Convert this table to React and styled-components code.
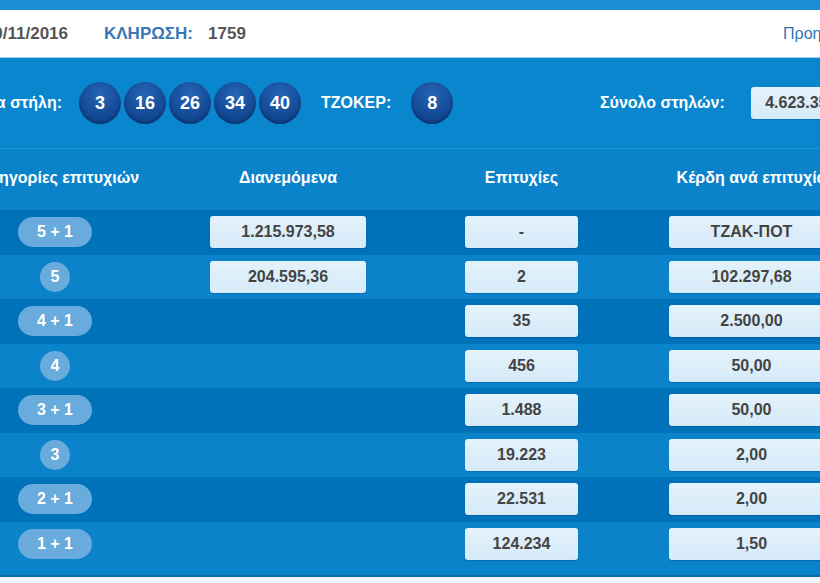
import React from 'react';
import styled, { createGlobalStyle } from 'styled-components';

const GlobalStyle = createGlobalStyle`
  html, body {
    margin: 0;
    padding: 0;
    background: #eef8fc;
    overflow: hidden;
  }
  body {
    font-family: "Liberation Sans", Arial, sans-serif;
  }
`;

const Page = styled.div`
  margin-left: -200px;
  width: 1240px;
`;

const TopStrip = styled.div`
  height: 10px;
  background: #1a8fd6;
`;

const InfoBar = styled.div`
  height: 47px;
  background: #fff;
  border-bottom: 1px solid #9fd0ee;
  display: grid;
  grid-template-columns: 268px 715px auto;
  align-items: center;
  font-size: 17px;
  font-weight: bold;
`;

const InfoCell = styled.div`
  display: flex;
  align-items: center;
  justify-content: ${p => (p.$right ? 'flex-end' : 'flex-start')};
  padding-left: ${p => p.$pad || 0}px;
  white-space: nowrap;
`;

const InfoLabel = styled.span`
  color: #3a78b4;
  margin-right: 15px;
`;

const InfoValue = styled.span`
  color: #555;
`;

const InfoLink = styled.span`
  color: #2f73b4;
  font-weight: normal;
  font-size: 16px;
`;

const DrawBar = styled.div`
  height: 90px;
  background: #0a86ce;
  border-bottom: 1px solid #1b93d8;
  display: grid;
  grid-template-columns: 262px 538px auto;
  align-items: center;
`;

const DrawLabel = styled.span`
  color: #fff;
  font-size: 16px;
  font-weight: bold;
  white-space: nowrap;
  text-align: ${p => (p.$right ? 'right' : 'left')};
`;

const BallGroup = styled.div`
  display: flex;
  align-items: center;
  padding-left: 17px;
`;

const Balls = styled.div`
  display: flex;
  gap: 3px;
  margin-right: 20px;
`;

const Ball = styled.div`
  width: 42px;
  height: 42px;
  border-radius: 50%;
  background: radial-gradient(circle at 50% 30%, #2866b6 0%, #17509e 45%, #0c3a7e 100%);
  box-shadow: inset 0 -2px 3px rgba(0, 20, 60, 0.35);
  display: flex;
  align-items: center;
  justify-content: center;
  color: #fff;
  font-size: 18px;
  font-weight: bold;
  margin-left: ${p => p.$gap || 0}px;
`;

const TotalGroup = styled.div`
  display: flex;
  align-items: center;
  gap: 26px;
`;

const ValueBox = styled.div`
  width: ${p => p.$w}px;
  height: 32px;
  border-radius: 3px;
  background: linear-gradient(#e4f2fb, #d5eaf8);
  box-shadow: 0 1px 1px rgba(0, 40, 90, 0.25);
  color: #444;
  font-size: 16px;
  font-weight: bold;
  display: flex;
  align-items: center;
  justify-content: center;
  white-space: nowrap;
`;

const Table = styled.div`
  background: #0a83cb;
  padding-bottom: 9px;
  border-bottom: 2px solid #0a6aa8;
`;

const COLS = '310px 156px 99px 113px 91px 165px';

const HeadRow = styled.div`
  height: 61px;
  padding-left: 100px;
  display: grid;
  grid-template-columns: ${COLS};
  align-items: center;
  color: #fff;
  font-size: 16px;
  font-weight: bold;
  white-space: nowrap;
`;

const HeadCell = styled.div`
  grid-column: ${p => p.$col};
  text-align: center;
  margin-top: -3px;
`;

const Row = styled.div`
  height: 44.5px;
  padding-left: 100px;
  display: grid;
  grid-template-columns: ${COLS};
  align-items: center;
  background: ${p => (p.$dark ? '#0072ba' : 'transparent')};
`;

const Cell = styled.div`
  grid-column: ${p => p.$col};
  display: flex;
  justify-content: center;
`;

const Pill = styled.div`
  min-width: 30px;
  height: 30px;
  padding: 0 ${p => (p.$wide ? 19 : 0)}px;
  box-sizing: border-box;
  border-radius: 15px;
  background: #69abdc;
  color: #fff;
  font-size: 16px;
  font-weight: bold;
  display: flex;
  align-items: center;
  justify-content: center;
  white-space: nowrap;
`;

const rows = [
  { cat: '5 + 1', dist: '1.215.973,58', wins: '-', prize: 'ΤΖΑΚ-ΠΟΤ' },
  { cat: '5', dist: '204.595,36', wins: '2', prize: '102.297,68' },
  { cat: '4 + 1', wins: '35', prize: '2.500,00' },
  { cat: '4', wins: '456', prize: '50,00' },
  { cat: '3 + 1', wins: '1.488', prize: '50,00' },
  { cat: '3', wins: '19.223', prize: '2,00' },
  { cat: '2 + 1', wins: '22.531', prize: '2,00' },
  { cat: '1 + 1', wins: '124.234', prize: '1,50' }
];

const numbers = ['3', '16', '26', '34', '40'];

export default function App() {
  return (
    <Page>
      <GlobalStyle />
      <TopStrip />
      <InfoBar>
        <InfoCell $right>
          <InfoLabel>ΗΜΕΡΟΜΗΝΙΑ:</InfoLabel>
          <InfoValue>10/11/2016</InfoValue>
        </InfoCell>
        <InfoCell $pad={36}>
          <InfoLabel>ΚΛΗΡΩΣΗ:</InfoLabel>
          <InfoValue>1759</InfoValue>
        </InfoCell>
        <InfoCell>
          <InfoLink>Προηγούμενες κληρώσεις</InfoLink>
        </InfoCell>
      </InfoBar>

      <DrawBar>
        <DrawLabel $right>Νικήτρια στήλη:</DrawLabel>
        <BallGroup>
          <Balls>
            {numbers.map(n => (
              <Ball key={n}>{n}</Ball>
            ))}
          </Balls>
          <DrawLabel>ΤΖΟΚΕΡ:</DrawLabel>
          <Ball $gap={20}>8</Ball>
        </BallGroup>
        <TotalGroup>
          <DrawLabel>Σύνολο στηλών:</DrawLabel>
          <ValueBox $w={100}>4.623.358</ValueBox>
        </TotalGroup>
      </DrawBar>

      <Table>
        <HeadRow>
          <HeadCell $col={1}>Κατηγορίες επιτυχιών</HeadCell>
          <HeadCell $col={2}>Διανεμόμενα</HeadCell>
          <HeadCell $col={4}>Επιτυχίες</HeadCell>
          <HeadCell $col={6}>Κέρδη ανά επιτυχία</HeadCell>
        </HeadRow>
        {rows.map((r, i) => (
          <Row key={r.cat} $dark={i % 2 === 0}>
            <Cell $col={1}>
              <Pill $wide={r.cat.length > 1}>{r.cat}</Pill>
            </Cell>
            {r.dist ? (
              <Cell $col={2}>
                <ValueBox $w={156}>{r.dist}</ValueBox>
              </Cell>
            ) : null}
            <Cell $col={4}>
              <ValueBox $w={113}>{r.wins}</ValueBox>
            </Cell>
            <Cell $col={6}>
              <ValueBox $w={165}>{r.prize}</ValueBox>
            </Cell>
          </Row>
        ))}
      </Table>
    </Page>
  );
}
